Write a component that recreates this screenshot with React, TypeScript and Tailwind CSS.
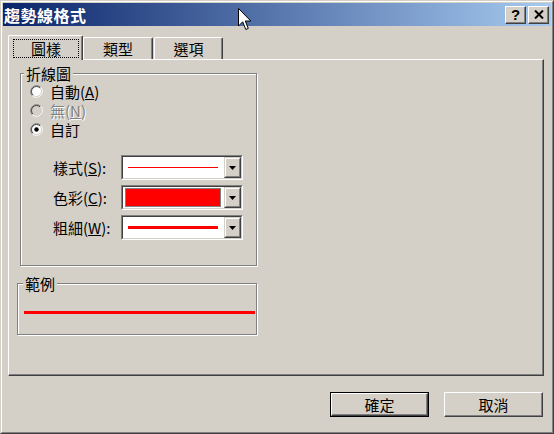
import React from "react";

const Radio = ({ checked = false, disabled = false }: { checked?: boolean; disabled?: boolean }) => (
  <svg width="13" height="13" viewBox="0 0 13 13" className="shrink-0">
    <circle cx="6.5" cy="6.5" r="5" fill={disabled ? "#d4d0c8" : "#ffffff"} />
    <path d="M2.26 10.74 A6 6 0 0 1 10.74 2.26" stroke="#808080" fill="none" />
    <path d="M10.74 2.26 A6 6 0 0 1 2.26 10.74" stroke="#ffffff" fill="none" />
    <path d="M2.96 10.04 A5 5 0 0 1 10.04 2.96" stroke="#404040" fill="none" />
    <path d="M10.04 2.96 A5 5 0 0 1 2.96 10.04" stroke="#d4d0c8" fill="none" />
    {checked && <circle cx="6.5" cy="6.5" r="2.2" fill="#000000" />}
  </svg>
);

const DropBtn = () => (
  <div className="w-[17px] h-full border border-t-[#d4d0c8] border-l-[#d4d0c8] border-r-[#404040] border-b-[#404040] bg-[#d4d0c8]">
    <div className="h-full border border-t-white border-l-white border-r-[#808080] border-b-[#808080] flex items-center justify-center">
      <svg width="7" height="4" viewBox="0 0 7 4">
        <path d="M0 0 H7 L3.5 4 Z" fill="#000000" />
      </svg>
    </div>
  </div>
);

const Combo = ({ children }: { children: React.ReactNode }) => (
  <div className="w-[122px] h-[25px] border border-t-[#808080] border-l-[#808080] border-r-white border-b-white">
    <div className="h-full border border-t-[#404040] border-l-[#404040] border-r-[#d4d0c8] border-b-[#d4d0c8] bg-white flex">
      <div className="flex-1 flex items-center">{children}</div>
      <DropBtn />
    </div>
  </div>
);

const Field = ({ label, hot, children }: { label: string; hot: string; children: React.ReactNode }) => (
  <div className="flex items-center h-[25px]">
    <div className="w-[68px] whitespace-nowrap">
      {label}(<u>{hot}</u>):
    </div>
    <Combo>{children}</Combo>
  </div>
);

const Button = ({ label, primary = false }: { label: string; primary?: boolean }) => (
  <div className={primary ? "w-[99px] h-[25px] border border-black" : "w-[99px] h-[25px]"}>
    <div className="h-full border border-t-white border-l-white border-r-[#404040] border-b-[#404040] shadow-[inset_-1px_-1px_0_#808080] flex items-center justify-center">
      {label}
    </div>
  </div>
);

export default function App() {
  return (
    <div className="w-[554px] h-[434px] bg-[#d4d0c8] border border-t-[#d4d0c8] border-l-[#d4d0c8] border-r-[#404040] border-b-[#404040] font-['Noto_Sans_CJK_TC',sans-serif] text-[15px] leading-[19px] text-black relative overflow-hidden select-none">
      <div className="h-full border border-t-white border-l-white border-r-[#808080] border-b-[#808080] p-px flex flex-col">
        {/* title bar */}
        <div className="h-[23px] shrink-0 bg-linear-to-r/srgb from-[#0a246a] to-[#a6caf0] flex items-center pl-px pr-[2px]">
          <div className="text-white font-bold text-[16px] leading-[20px] tracking-[0.5px]">趨勢線格式</div>
          <div className="ml-auto flex gap-[2px]">
            <div className="w-[21px] h-[18px] bg-[#d4d0c8] border border-t-white border-l-white border-r-[#404040] border-b-[#404040] shadow-[inset_-1px_-1px_0_#808080] flex items-center justify-center">
              <span className="font-['Liberation_Sans',sans-serif] font-bold text-[15px] leading-[15px] -mt-px">?</span>
            </div>
            <div className="w-[21px] h-[18px] bg-[#d4d0c8] border border-t-white border-l-white border-r-[#404040] border-b-[#404040] shadow-[inset_-1px_-1px_0_#808080] flex items-center justify-center">
              <svg width="10" height="9" viewBox="0 0 10 9">
                <path d="M1 0.5 L9 8.5 M9 0.5 L1 8.5" stroke="#000000" strokeWidth="2" />
              </svg>
            </div>
          </div>
        </div>

        <div className="flex-1 flex flex-col pl-[5px] pt-[9px]">
          {/* tabs */}
          <div className="flex items-end h-[24px]">
            <div className="relative z-10 -mb-px w-[75px] h-[25px] bg-[#d4d0c8] border-t border-l border-t-white border-l-white border-r border-r-[#404040] shadow-[inset_-1px_0_0_#808080] rounded-t-[2px] pl-[4px] pt-[3px]">
              <div className="w-[66px] h-[19px] border border-dotted border-black flex items-center justify-center">圖樣</div>
            </div>
            <div className="w-[70px] h-[22px] border-t border-l border-t-white border-l-white border-r border-r-[#404040] shadow-[inset_-1px_0_0_#808080] rounded-t-[2px] flex items-center justify-center">
              類型
            </div>
            <div className="ml-px w-[69px] h-[22px] border-t border-l border-t-white border-l-white border-r border-r-[#404040] shadow-[inset_-1px_0_0_#808080] rounded-t-[2px] flex items-center justify-center">
              選項
            </div>
          </div>

          {/* panel */}
          <div className="w-[536px] h-[317px] shrink-0 border border-t-white border-l-white border-r-[#404040] border-b-[#404040] shadow-[inset_-1px_-1px_0_#808080] flex flex-col items-start">
            <div className="relative ml-[11px] mt-[13px] w-[237px] h-[193px] border border-[#808080] shadow-[1px_1px_0_#ffffff,inset_1px_1px_0_#ffffff] pt-[8px]">
              <span className="absolute left-[3px] -top-[10px] px-[2px] bg-[#d4d0c8]">折線圖</span>
              <div className="flex flex-col gap-px pl-[9px]">
                <div className="flex items-center h-[18px] gap-[7px]">
                  <Radio />
                  <span>
                    自動(<u>A</u>)
                  </span>
                </div>
                <div className="flex items-center h-[18px] gap-[7px]">
                  <Radio disabled />
                  <span className="text-[#808080] [text-shadow:1px_1px_0_#ffffff]">
                    無(<u>N</u>)
                  </span>
                </div>
                <div className="flex items-center h-[18px] gap-[7px]">
                  <Radio checked />
                  <span>自訂</span>
                </div>
              </div>
              <div className="mt-[17px] pl-[32px] flex flex-col gap-[5px]">
                <Field label="樣式" hot="S">
                  <div className="ml-[5px] w-[90px] h-px bg-[#ff0000]" />
                </Field>
                <Field label="色彩" hot="C">
                  <div className="ml-[2px] w-[96px] h-[19px] border border-[#808080] bg-[#ff0000]" />
                </Field>
                <Field label="粗細" hot="W">
                  <div className="ml-[5px] w-[90px] h-[3px] bg-[#ff0000]" />
                </Field>
              </div>
            </div>

            <div className="relative ml-[8px] mt-[17px] w-[240px] h-[52px] border border-[#808080] shadow-[1px_1px_0_#ffffff,inset_1px_1px_0_#ffffff]">
              <span className="absolute left-[5px] -top-[10px] px-[2px] bg-[#d4d0c8]">範例</span>
              <div className="ml-[6px] mt-[27px] w-[231px] h-[3px] bg-[#ff0000]" />
            </div>
          </div>

          {/* buttons */}
          <div className="mt-[16px] flex justify-end gap-[15px] pr-[8px]">
            <Button label="確定" primary />
            <Button label="取消" />
          </div>
        </div>
      </div>

      {/* mouse pointer */}
      <svg className="absolute left-[237px] top-[7px]" width="14" height="23" viewBox="0 0 14 23">
        <path d="M0.5 0.5 V18 L4.7 13.8 L7.8 21.5 L10.3 20.4 L7.3 13 H12.8 Z" fill="#ffffff" stroke="#000000" strokeLinejoin="miter" />
      </svg>
    </div>
  );
}
